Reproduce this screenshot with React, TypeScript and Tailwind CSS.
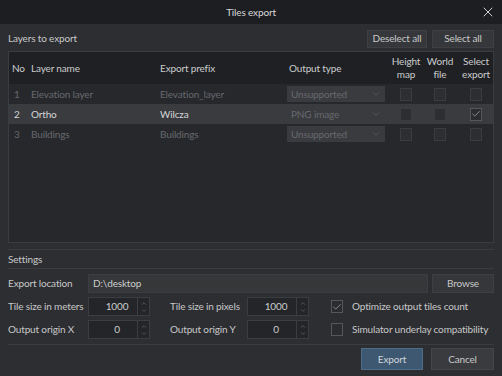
import { ChevronDown, ChevronUp, X, Check } from 'lucide-react';

const layers = [
  { no: 1, name: 'Elevation layer', prefix: 'Elevation_layer', type: 'Unsupported', active: false, selected: false },
  { no: 2, name: 'Ortho', prefix: 'Wilcza', type: 'PNG image', active: true, selected: true },
  { no: 3, name: 'Buildings', prefix: 'Buildings', type: 'Unsupported', active: false, selected: false },
];

const cols = 'grid grid-cols-[20px_129px_129px_102px_34px_34px_38px]';

function Box({ checked, dim }: { checked?: boolean; dim?: boolean }) {
  return (
    <div
      className={`w-[12px] h-[13px] flex items-center justify-center border ${
        dim ? 'border-[#3a3c40] bg-[#2c2e32]' : 'border-[#55575b] bg-[#2a2c30]'
      }`}
    >
      {checked && <Check className="w-[10px] h-[10px] text-[#c0c0c0]" strokeWidth={1.5} />}
    </div>
  );
}

function Spin({ value }: { value: string }) {
  return (
    <div className="w-[62px] h-[19px] flex items-center bg-[#232529] border border-[#3b3d41]">
      <span className="flex-1 text-center pl-[8px] text-[#cccccc]">{value}</span>
      <div className="w-[12px] h-full flex flex-col items-center justify-center border-l border-[#3b3d41] text-[#8a8c90]">
        <ChevronUp className="w-[8px] h-[7px]" strokeWidth={1.5} />
        <ChevronDown className="w-[8px] h-[7px]" strokeWidth={1.5} />
      </div>
    </div>
  );
}

export default function App() {
  return (
    <div
      className="w-[502px] h-[376px] bg-[#2c2e32] text-[10px] tracking-[-0.15px] text-[#c8c8c8] flex flex-col overflow-hidden whitespace-nowrap"
      style={{ fontFamily: 'Lato, "Noto Sans", sans-serif' }}
    >
      {/* Title bar */}
      <div className="h-[24px] bg-[#1c1e22] flex items-center justify-center relative">
        <span className="text-[#d8d8d8]">Tiles export</span>
        <X className="absolute right-[6px] top-[4px] w-[16px] h-[16px] text-[#d0d0d0]" strokeWidth={1.5} />
      </div>

      {/* Layers header */}
      <div className="flex items-center justify-between px-[8px] pt-[3px] h-[26px]">
        <span>Layers to export</span>
        <div className="flex gap-[5px]">
          <button className="w-[60px] h-[18px] bg-[#35373b] border border-[#3d3f43] text-[#c8c8c8]">Deselect all</button>
          <button className="w-[62px] h-[18px] bg-[#35373b] border border-[#3d3f43] text-[#c8c8c8]">Select all</button>
        </div>
      </div>

      {/* Table */}
      <div className="mx-[8px] mt-[1px] h-[192px] bg-[#26282c] border border-[#3a3c40]">
        <div className={`${cols} h-[32px] bg-[#1e2024] items-center text-[#cccccc]`}>
          <span className="pl-[3px]">No</span>
          <span className="pl-[2px]">Layer name</span>
          <span className="pl-[2px]">Export prefix</span>
          <span className="pl-[2px]">Output type</span>
          <span className="text-center leading-[13px]">Height<br />map</span>
          <span className="text-center leading-[13px]">World<br />file</span>
          <span className="text-center leading-[13px]">Select<br />export</span>
        </div>
        {layers.map((l) => (
          <div
            key={l.no}
            className={`${cols} h-[20px] items-center ${
              l.active ? 'bg-[#393b3f] text-[#d6d6d6]' : 'text-[#67696d]'
            }`}
          >
            <span className="pl-[5px]">{l.no}</span>
            <span className="pl-[2px]">{l.name}</span>
            <span className="pl-[2px]">{l.prefix}</span>
            <div className="h-[16px] mr-[4px] bg-[#393b3f] flex items-center justify-between pl-[4px] pr-[4px] text-[#67696d]">
              <span>{l.type}</span>
              <ChevronDown className="w-[10px] h-[10px] text-[#606266]" strokeWidth={1.5} />
            </div>
            <div className="flex justify-center"><Box dim /></div>
            <div className="flex justify-center"><Box dim /></div>
            <div className="flex justify-center"><Box dim={!l.active} checked={l.selected} /></div>
          </div>
        ))}
      </div>

      {/* Settings */}
      <div className="mx-[8px] mt-[6px] border-t border-[#3a3c40]" />
      <div className="px-[8px] h-[18px] flex items-center">Settings</div>
      <div className="mx-[8px] border-t border-[#3a3c40]" />

      <div className="px-[8px] mt-[5px] flex flex-col gap-[4px]">
        <div className="flex items-center h-[19px]">
          <span className="w-[80px]">Export location</span>
          <div className="w-[340px] h-[19px] bg-[#353739] border border-[#3b3d41] flex items-center pl-[4px] text-[#cccccc]">
            D:\desktop
          </div>
          <button className="ml-[4px] w-[62px] h-[19px] bg-[#35373b] border border-[#3d3f43] text-[#c8c8c8]">Browse</button>
        </div>
        <div className="flex items-center h-[19px]">
          <span className="w-[80px]">Tile size in meters</span>
          <Spin value="1000" />
          <span className="w-[97px] pl-[20px]">Tile size in pixels</span>
          <Spin value="1000" />
          <div className="ml-[22px] flex items-center gap-[9px]">
            <Box checked />
            <span>Optimize output tiles count</span>
          </div>
        </div>
        <div className="flex items-center h-[19px]">
          <span className="w-[80px]">Output origin X</span>
          <Spin value="0" />
          <span className="w-[97px] pl-[20px]">Output origin Y</span>
          <Spin value="0" />
          <div className="ml-[22px] flex items-center gap-[9px]">
            <Box />
            <span>Simulator underlay compatibility</span>
          </div>
        </div>
      </div>

      <div className="mx-[8px] mt-[5px] border-t border-[#3a3c40]" />
      <div className="flex justify-end gap-[8px] px-[8px] mt-[3px]">
        <button className="w-[62px] h-[22px] bg-[#3d5870] border border-[#4d6d88] text-[#d0d6dc]">Export</button>
        <button className="w-[63px] h-[22px] bg-[#393b3f] border border-[#444649] text-[#c8c8c8]">Cancel</button>
      </div>
    </div>
  );
}
